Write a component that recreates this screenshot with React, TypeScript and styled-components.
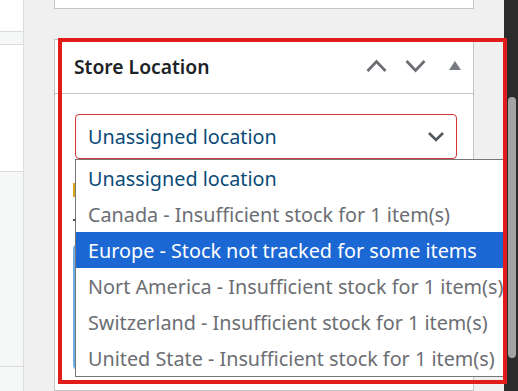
import styled, { createGlobalStyle } from "styled-components";

const GlobalStyle = createGlobalStyle`
  html, body {
    margin: 0;
    height: 391px;
    overflow: hidden;
    background: #f0f0f1;
    font-family: "Noto Sans", "Open Sans", sans-serif;
  }
`;

const options = [
  { label: "Unassigned location", current: true },
  { label: "Canada - Insufficient stock for 1 item(s)" },
  { label: "Europe - Stock not tracked for some items", active: true },
  { label: "Nort America - Insufficient stock for 1 item(s)" },
  { label: "Switzerland - Insufficient stock for 1 item(s)" },
  { label: "United State - Insufficient stock for 1 item(s)" },
];

const Chevron = ({ up }: { up?: boolean }) => (
  <svg width="24" height="16" viewBox="0 0 24 16">
    <polyline
      points={up ? "2.5,13 11.5,3.5 20.5,13" : "2.5,3 11.5,12.5 20.5,3"}
      fill="none"
      stroke="#6b6e73"
      strokeWidth="2.8"
    />
  </svg>
);

const Triangle = () => (
  <svg width="24" height="16" viewBox="0 0 24 16">
    <polygon points="6,12 12,3 18,12" fill="#787c82" />
  </svg>
);

const SelectArrow = () => (
  <svg width="18" height="12" viewBox="0 0 18 12">
    <polyline points="2,2 9,9 16,2" fill="none" stroke="#50575e" strokeWidth="2.6" />
  </svg>
);

export default function App() {
  return (
    <Page>
      <GlobalStyle />
      <Sidebar>
        <SideRow $height={31} />
        <SideRow $height={12} $tone="#f6f7f7" />
        <SideRow $height={127} />
        <SideRow $height={196} $tone="#f6f7f7" />
        <SideRow $height={24} $tone="#f6f7f7" $last />
      </Sidebar>

      <Column>
        <TopCard />
        <MetaBox>
          <BoxHeader>
            <Title>Store Location</Title>
            <Controls>
              <IconButton>
                <Chevron up />
              </IconButton>
              <IconButton>
                <Chevron />
              </IconButton>
              <IconButton>
                <Triangle />
              </IconButton>
            </Controls>
          </BoxHeader>
          <BoxBody>
            <SelectWrap>
              <Select>
                <span>Unassigned location</span>
                <SelectArrow />
              </Select>
              <OptionList>
                {options.map((o) => (
                  <Option key={o.label} $active={o.active} $current={o.current}>
                    {o.label}
                  </Option>
                ))}
              </OptionList>
            </SelectWrap>
            <Notice />
            <Hint />
            <InfoBox />
          </BoxBody>
        </MetaBox>
      </Column>

      <ScrollTrack>
        <Thumb />
      </ScrollTrack>

      <Highlight />
    </Page>
  );
}

const Page = styled.div`
  position: relative;
  display: flex;
  height: 391px;
  overflow: hidden;
`;

const Sidebar = styled.div`
  width: 23px;
  flex-shrink: 0;
  display: flex;
  flex-direction: column;
  background: #ffffff;
  border-right: 1px solid #dcdcde;
`;

const SideRow = styled.div<{ $height: number; $tone?: string; $last?: boolean }>`
  height: ${(p) => p.$height}px;
  background: ${(p) => p.$tone || "#ffffff"};
  border-bottom: ${(p) => (p.$last ? "none" : "1px solid #dcdcde")};
`;

const Column = styled.div`
  flex: 1;
  display: flex;
  flex-direction: column;
  padding: 0 30px;
  min-width: 0;
`;

const TopCard = styled.div`
  height: 8px;
  flex-shrink: 0;
  background: #ffffff;
  border: 1px solid #c3c4c7;
  border-top: none;
`;

const MetaBox = styled.div`
  margin-top: 30px;
  flex: 1;
  background: #ffffff;
  border: 1px solid #c3c4c7;
  display: flex;
  flex-direction: column;
`;

const BoxHeader = styled.div`
  height: 53px;
  display: flex;
  align-items: center;
  justify-content: space-between;
  padding: 0 6px 0 19px;
  border-bottom: 1px solid #c3c4c7;
`;

const Title = styled.h2`
  margin: 0;
  font-size: 19.3px;
  font-weight: 600;
  color: #1d2327;
`;

const Controls = styled.div`
  display: flex;
  gap: 15px;
  margin-top: -2px;
`;

const IconButton = styled.div`
  width: 24px;
  height: 16px;
  display: flex;
`;

const BoxBody = styled.div`
  flex: 1;
  padding: 20px 15px 0 20px;
  display: flex;
  flex-direction: column;
`;

const SelectWrap = styled.div`
  position: relative;
`;

const Select = styled.div`
  height: 43px;
  width: 357px;
  border: 1px solid #d63638;
  border-radius: 4px;
  display: flex;
  align-items: center;
  justify-content: space-between;
  padding: 0 11px 0 12px;
  box-sizing: content-box;
  font-size: 19.8px;
  color: #0a4b78;
  white-space: nowrap;
`;

const OptionList = styled.div`
  position: absolute;
  top: 45px;
  left: 0;
  width: 429px;
  border: 1px solid #767676;
  background: #ffffff;
  z-index: 2;
`;

const Option = styled.div<{ $active?: boolean; $current?: boolean }>`
  height: 36px;
  display: flex;
  align-items: center;
  padding-left: 12px;
  font-size: 19.8px;
  white-space: nowrap;
  overflow: hidden;
  color: ${(p) => (p.$active ? "#ffffff" : p.$current ? "#0a4b78" : "#6b6e73")};
  background: ${(p) => (p.$active ? "#1b67d4" : "transparent")};
`;

const Notice = styled.div`
  margin: 24px 0 0 -2px;
  height: 14px;
  border-left: 4px solid #dba617;
`;

const Hint = styled.div`
  margin: 22px 0 0 -2px;
  width: 6px;
  height: 2px;
  background: #50575e;
`;

const InfoBox = styled.div`
  margin: 22px 0 0 -2px;
  height: 124px;
  border: 2px solid #72aee6;
  border-radius: 6px;
`;

const ScrollTrack = styled.div`
  width: 14px;
  flex-shrink: 0;
  background: #2b2b2b;
  padding: 97px 2px 0 4px;
  box-sizing: border-box;
`;

const Thumb = styled.div`
  height: 261px;
  border-radius: 4px;
  background: #a3a3a3;
`;

const Highlight = styled.div`
  position: absolute;
  left: 58px;
  top: 38px;
  width: 441px;
  height: 338px;
  border: 4px solid #e21b1b;
  pointer-events: none;
  z-index: 3;
`;
